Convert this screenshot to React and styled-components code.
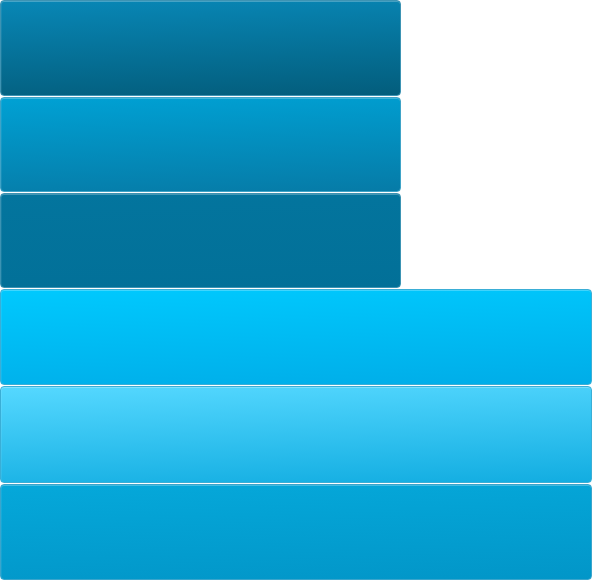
import React from "react";
import styled, { createGlobalStyle } from "styled-components";

const Global = createGlobalStyle`
  html, body { margin: 0; padding: 0; background: #ffffff; font-family: "Liberation Sans", Arial, sans-serif; }
`;

const Stack = styled.div`
  display: flex;
  flex-direction: column;
  align-items: flex-start;
  gap: 1px;
`;

const Button = styled.div`
  box-sizing: border-box;
  width: ${(p) => p.$w}px;
  height: ${(p) => p.$h}px;
  border: 1px solid ${(p) => p.$border};
  border-radius: 4px;
  background: linear-gradient(178deg, ${(p) => p.$top} 0%, ${(p) => p.$bottom} 100%);
  box-shadow: inset 0 1px 0 rgba(255, 255, 255, 0.25), inset 1px 0 0 rgba(255, 255, 255, 0.08);
`;

const buttons = [
  { w: 401, h: 96, top: "#0887b6", bottom: "#035d7c", border: "#3d93b3" },
  { w: 401, h: 95, top: "#00a1d4", bottom: "#067ba7", border: "#3fa3c7" },
  { w: 401, h: 95, top: "#03759e", bottom: "#027098", border: "#3b93b3" },
  { w: 592, h: 96, top: "#00c9fe", bottom: "#00ade8", border: "#3aaed6" },
  { w: 592, h: 97, top: "#55d8ff", bottom: "#12ade1", border: "#3aaed6" },
  { w: 592, h: 96, top: "#05a8da", bottom: "#0296c8", border: "#3aa5cc" },
];

export default function App() {
  return (
    <>
      <Global />
      <Stack>
        {buttons.map((b, i) => (
          <Button key={i} $w={b.w} $h={b.h} $top={b.top} $bottom={b.bottom} $border={b.border} />
        ))}
      </Stack>
    </>
  );
}
